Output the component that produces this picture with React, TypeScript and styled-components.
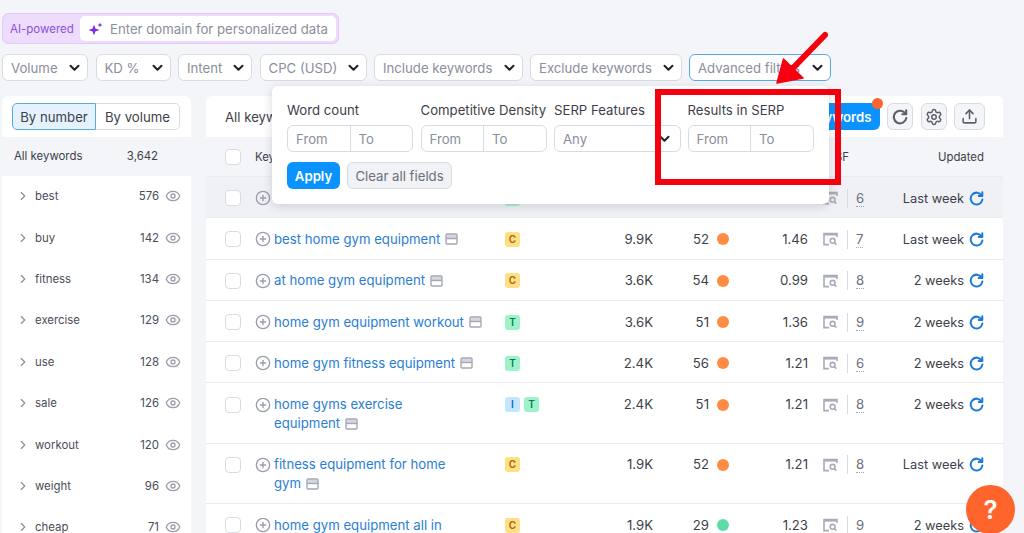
import React from 'react';
import styled, { createGlobalStyle } from 'styled-components';
import { ChevronRight, CirclePlus, Eye, Settings, Upload } from 'lucide-react';

const GlobalStyle = createGlobalStyle`
  html, body {
    margin: 0;
    padding: 0;
    background: #f4f5f9;
  }
  * {
    box-sizing: border-box;
  }
`;

const Page = styled.div`
  position: relative;
  width: 1024px;
  height: 533px;
  overflow: hidden;
  padding: 13px 0 0 2px;
  background: #f4f5f9;
  color: #3d3f4a;
  font-family: Inter, 'Liberation Sans', sans-serif;
  font-size: 13.2px;
`;

const AiBar = styled.div`
  display: flex;
  align-items: center;
  height: 31px;
  width: 337px;
  padding: 3px;
  border-radius: 7px;
  background: #eddcfb;
  box-shadow: inset 0 0 0 1px #e3c9fa;
`;

const AiLabel = styled.span`
  width: 75px;
  padding-left: 5px;
  font-size: 11.5px;
  color: #8c4fe0;
`;

const AiInput = styled.div`
  flex: 1;
  display: flex;
  align-items: center;
  gap: 7px;
  height: 25px;
  padding-left: 8px;
  border-radius: 5px;
  background: #fff;
  color: #8b8e9b;
`;

const FilterRow = styled.div`
  display: flex;
  gap: 7.5px;
  margin-top: 10px;
`;

const FilterButton = styled.div<{ $w: number; $active?: boolean }>`
  display: flex;
  align-items: center;
  justify-content: space-between;
  width: ${(p) => p.$w}px;
  height: 27px;
  padding: 0 7px 0 8px;
  border: 1px solid ${(p) => (p.$active ? '#59a8ea' : '#d9dbe2')};
  border-radius: 6px;
  background: #fff;
  color: #8b8e9b;
  white-space: nowrap;
`;

const Content = styled.div`
  display: flex;
  gap: 15px;
  margin-top: 15px;
`;

const Sidebar = styled.aside`
  width: 189px;
  height: 440px;
  border-radius: 6px 6px 0 0;
  background: #fff;
  overflow: hidden;
`;

const ToggleBar = styled.div`
  display: flex;
  height: 41px;
  padding: 7px 10px;
`;

const Toggle = styled.div<{ $on?: boolean }>`
  display: flex;
  align-items: center;
  justify-content: center;
  width: 84px;
  height: 27px;
  border: 1px solid ${(p) => (p.$on ? '#59a8ea' : '#d9dbe2')};
  border-left-width: ${(p) => (p.$on ? 1 : 0)}px;
  border-radius: ${(p) => (p.$on ? '5px 0 0 5px' : '0 5px 5px 0')};
  background: ${(p) => (p.$on ? '#e4f2fe' : '#fff')};
  color: #3d3f4a;
`;

const SideHead = styled.div`
  display: flex;
  align-items: center;
  height: 38.6px;
  padding-left: 12px;
  background: #f4f5f9;
  font-size: 11.4px;
`;

const SideHeadCount = styled.span`
  margin-left: auto;
  margin-right: 33px;
`;

const SideRow = styled.div`
  display: flex;
  align-items: center;
  height: 41.4px;
  padding: 0 10px 0 14px;
  font-size: 11.4px;
  color: #4a4c57;
`;

const SideName = styled.span`
  margin-left: 5px;
`;

const SideCount = styled.span`
  margin-left: auto;
  margin-right: 6px;
`;

const Main = styled.main`
  width: 797px;
  height: 440px;
  border-radius: 6px 6px 0 0;
  background: #fff;
  overflow: hidden;
`;

const Toolbar = styled.div`
  display: flex;
  align-items: center;
  gap: 7.5px;
  height: 41px;
  padding: 0 18px 0 19px;
`;

const ToolbarTitle = styled.span`
  margin-right: auto;
`;

const PrimaryButton = styled.div`
  position: relative;
  display: flex;
  align-items: center;
  height: 27px;
  padding: 0 8px;
  border-radius: 6px;
  background: #0a93ff;
  color: #fff;
  font-weight: 600;
  white-space: nowrap;
`;

const Notify = styled.span`
  position: absolute;
  top: -5px;
  right: -3px;
  width: 11px;
  height: 11px;
  border-radius: 50%;
  background: #ff642d;
`;

const IconButton = styled.div<{ $w?: number }>`
  display: flex;
  align-items: center;
  justify-content: center;
  width: ${(p) => p.$w ?? 26}px;
  height: 27px;
  border: 1px solid #d9dbe2;
  border-radius: 6px;
  background: #f4f5f9;
  color: #5d606c;
`;

const RowBase = styled.div`
  display: flex;
  padding-left: 19px;
  padding-right: 19px;
`;

const HeadRow = styled(RowBase)`
  align-items: center;
  height: 40px;
  background: #f4f5f9;
  border-bottom: 1px solid #e9ebf0;
  font-size: 11.4px;
`;

const Row = styled(RowBase)<{ $hover?: boolean }>`
  padding-top: 11.7px;
  padding-bottom: 9.6px;
  line-height: 19px;
  border-bottom: 1px solid #e9ebf0;
  background: ${(p) => (p.$hover ? '#f0f1f5' : '#fff')};
`;

const CheckCell = styled.div`
  flex: 0 0 30px;
  display: flex;
  align-items: center;
  height: 19px;
`;

const Checkbox = styled.span`
  width: 16px;
  height: 16px;
  border: 1px solid #d9dbe2;
  border-radius: 4px;
  background: #fff;
`;

const KeywordCell = styled.div`
  flex: 0 0 250px;
  display: flex;
  align-items: flex-start;
  gap: 3px;
  padding-right: 21px;
`;

const PlusWrap = styled.span`
  flex: none;
  display: flex;
  align-items: center;
  height: 19px;
  color: #9a9dab;
`;

const KeywordLink = styled.span`
  color: #2a7ed3;
`;

const LastWord = styled.span`
  white-space: nowrap;
`;

const PageIcon = styled.svg`
  display: inline-block;
  width: 13px;
  height: 12px;
  margin-left: 5px;
  vertical-align: -1.5px;
`;

const IntentCell = styled.div`
  flex: 0 0 80px;
  display: flex;
  gap: 4px;
  height: 19px;
  align-items: center;
`;

const Badge = styled.span<{ $bg: string; $fg: string }>`
  display: flex;
  align-items: center;
  justify-content: center;
  width: 15px;
  height: 15px;
  border-radius: 3px;
  background: ${(p) => p.$bg};
  color: ${(p) => p.$fg};
  font-size: 10px;
  font-weight: 600;
`;

const NumCell = styled.div<{ $w: number }>`
  flex: 0 0 ${(p) => p.$w}px;
  text-align: right;
`;

const KdCell = styled.div`
  flex: 0 0 76px;
  display: flex;
  align-items: center;
  justify-content: flex-end;
  gap: 8px;
  height: 19px;
`;

const Dot = styled.span<{ $c: string }>`
  width: 12px;
  height: 12px;
  border-radius: 50%;
  background: ${(p) => p.$c};
`;

const SfCell = styled.div`
  flex: 0 0 72px;
  display: flex;
  align-items: center;
  height: 19px;
  padding-left: 15px;
  color: #6c6f7b;
`;

const SfSeparator = styled.span`
  width: 1px;
  height: 19px;
  margin: 0 8px 0 9px;
  background: #d9dbe2;
`;

const SfCount = styled.span`
  line-height: 16px;
  border-bottom: 1px dotted #a4a7b3;
`;

const UpdatedCell = styled.div`
  flex: 0 0 104px;
  display: flex;
  align-items: center;
  justify-content: flex-end;
  gap: 5px;
  height: 19px;
  font-size: 12.8px;
  color: #3d3f4a;
  white-space: nowrap;
`;

const HeadCell = styled.div<{ $w: number; $right?: boolean }>`
  flex: 0 0 ${(p) => p.$w}px;
  text-align: ${(p) => (p.$right ? 'right' : 'left')};
`;

const Popup = styled.div`
  position: absolute;
  top: 86px;
  left: 272px;
  width: 557px;
  height: 118px;
  padding: 15px 15px;
  border-radius: 6px;
  background: #fff;
  box-shadow: 0 2px 10px rgba(40, 45, 70, 0.18);
`;

const FieldRow = styled.div`
  display: flex;
  gap: 7.5px;
`;

const Field = styled.div`
  width: 126px;
`;

const FieldLabel = styled.div`
  height: 24px;
  line-height: 19px;
  white-space: nowrap;
`;

const RangeInput = styled.div`
  display: flex;
  height: 27px;
  border: 1px solid #d9dbe2;
  border-radius: 6px;
  color: #8b8e9b;
`;

const RangePart = styled.span`
  flex: 1;
  display: flex;
  align-items: center;
  padding-left: 8px;
  & + & {
    border-left: 1px solid #d9dbe2;
  }
`;

const SelectInput = styled(RangeInput)`
  align-items: center;
  justify-content: space-between;
  width: 127px;
  padding: 0 10px 0 8px;
`;

const ActionRow = styled.div`
  display: flex;
  gap: 7px;
  margin-top: 10px;
`;

const ApplyButton = styled.div`
  display: flex;
  align-items: center;
  justify-content: center;
  width: 53px;
  height: 27px;
  border-radius: 6px;
  background: #0a93ff;
  color: #fff;
  font-weight: 600;
`;

const ClearButton = styled.div`
  display: flex;
  align-items: center;
  justify-content: center;
  width: 105px;
  height: 27px;
  border: 1px solid #d9dbe2;
  border-radius: 6px;
  background: #f1f2f5;
  color: #6c6f7b;
`;

const RedBox = styled.div`
  position: absolute;
  top: 89px;
  left: 655px;
  width: 186px;
  height: 96px;
  border: 6.5px solid #f5000f;
`;

const Arrow = styled.svg`
  position: absolute;
  top: 28px;
  left: 772px;
`;

const HelpButton = styled.div`
  position: absolute;
  top: 485px;
  left: 966px;
  display: flex;
  align-items: center;
  justify-content: center;
  width: 49px;
  height: 49px;
  border-radius: 50%;
  background: #ff642d;
  color: #fff;
  font-size: 26px;
  font-weight: 600;
`;

const Chevron = () => (
  <svg width="11" height="8" viewBox="0 0 11 8" fill="none">
    <path d="M1.5 1.8 5.5 5.8 9.5 1.8" stroke="#1f2028" strokeWidth="2" strokeLinecap="round" strokeLinejoin="round" />
  </svg>
);

const Sparkle = () => (
  <svg width="15" height="14" viewBox="0 0 15 14">
    <path d="M6 2.5 7.4 6.6 11.5 8 7.4 9.4 6 13.5 4.6 9.4.5 8 4.6 6.6Z" fill="#7a2fe6" />
    <path d="M12 .5 12.7 2.3 14.5 3 12.7 3.7 12 5.5 11.3 3.7 9.5 3 11.3 2.3Z" fill="#7a2fe6" />
  </svg>
);

const KeywordPageIcon = () => (
  <PageIcon viewBox="0 0 13 12" fill="none" stroke="#a4a7b5" strokeWidth="1.4">
    <path d="M1.5 1.5H11.5V5H1.5Z" fill="#d5d7df" stroke="none" />
    <rect x="1" y="1" width="11" height="10" rx="1" />
    <path d="M1 5.5H12" />
  </PageIcon>
);

const SerpIcon = () => (
  <svg width="15" height="14" viewBox="0 0 15 14" fill="none" stroke="#a9acb9" strokeWidth="1.6">
    <path d="M14 5V1.6H1V12.6H6" />
    <path d="M1 2.6H14" strokeWidth="2" />
    <circle cx="9.6" cy="8.8" r="2.4" />
    <path d="M11.4 10.6 13.4 12.6" />
  </svg>
);

const ReloadIcon = ({ size, color }: { size: number; color: string }) => (
  <svg width={size} height={size} viewBox="0 0 15 15" fill="none" stroke={color} strokeWidth="2" strokeLinecap="round" strokeLinejoin="round">
    <path d="M12.6 4.4A5.9 5.9 0 1 0 13.4 8.6" />
    <path d="M13.3 1.3V4.9H9.7" />
  </svg>
);

type Intent = 'C' | 'I' | 'T';

const intentColors: Record<Intent, { bg: string; fg: string }> = {
  C: { bg: '#ffdf85', fg: '#a8650a' },
  I: { bg: '#c4e5fe', fg: '#0a69c2' },
  T: { bg: '#9ef2c9', fg: '#0a7a55' },
};

const filters = [
  { label: 'Volume', w: 86 },
  { label: 'KD %', w: 75 },
  { label: 'Intent', w: 74 },
  { label: 'CPC (USD)', w: 107 },
  { label: 'Include keywords', w: 148.5 },
  { label: 'Exclude keywords', w: 151.5 },
];

const groups = [
  ['best', '576'],
  ['buy', '142'],
  ['fitness', '134'],
  ['exercise', '129'],
  ['use', '128'],
  ['sale', '126'],
  ['workout', '120'],
  ['weight', '96'],
  ['cheap', '71'],
];

const orange = '#ff8c43';
const green = '#5fdba7';

const rows: {
  keyword: string;
  intents: Intent[];
  volume: string;
  kd: number;
  dot: string;
  cpc: string;
  sf: number;
  updated: string;
}[] = [
  { keyword: 'home workout machines', intents: ['T'], volume: '14.8K', kd: 58, dot: orange, cpc: '1.46', sf: 6, updated: 'Last week' },
  { keyword: 'best home gym equipment', intents: ['C'], volume: '9.9K', kd: 52, dot: orange, cpc: '1.46', sf: 7, updated: 'Last week' },
  { keyword: 'at home gym equipment', intents: ['C'], volume: '3.6K', kd: 54, dot: orange, cpc: '0.99', sf: 8, updated: '2 weeks' },
  { keyword: 'home gym equipment workout', intents: ['T'], volume: '3.6K', kd: 51, dot: orange, cpc: '1.36', sf: 9, updated: '2 weeks' },
  { keyword: 'home gym fitness equipment', intents: ['T'], volume: '2.4K', kd: 56, dot: orange, cpc: '1.21', sf: 6, updated: '2 weeks' },
  { keyword: 'home gyms exercise equipment', intents: ['I', 'T'], volume: '2.4K', kd: 51, dot: orange, cpc: '1.21', sf: 8, updated: '2 weeks' },
  { keyword: 'fitness equipment for home gym', intents: ['C'], volume: '1.9K', kd: 52, dot: orange, cpc: '1.21', sf: 8, updated: 'Last week' },
  { keyword: 'home gym equipment all in one', intents: ['C'], volume: '1.9K', kd: 29, dot: green, cpc: '1.23', sf: 9, updated: '2 weeks' },
];

const popupFields = ['Word count', 'Competitive Density', 'SERP Features', 'Results in SERP'];

const splitLastWord = (text: string) => {
  const at = text.lastIndexOf(' ');
  return [text.slice(0, at + 1), text.slice(at + 1)];
};

const App = () => (
  <Page>
    <GlobalStyle />
    <AiBar>
      <AiLabel>AI-powered</AiLabel>
      <AiInput>
        <Sparkle />
        Enter domain for personalized data
      </AiInput>
    </AiBar>

    <FilterRow>
      {filters.map((f) => (
        <FilterButton key={f.label} $w={f.w}>
          {f.label}
          <Chevron />
        </FilterButton>
      ))}
      <FilterButton $w={142} $active>
        Advanced filters
        <Chevron />
      </FilterButton>
    </FilterRow>

    <Content>
      <Sidebar>
        <ToggleBar>
          <Toggle $on>By number</Toggle>
          <Toggle>By volume</Toggle>
        </ToggleBar>
        <SideHead>
          All keywords
          <SideHeadCount>3,642</SideHeadCount>
        </SideHead>
        {groups.map(([name, count]) => (
          <SideRow key={name}>
            <ChevronRight size={14} color="#8b8e9b" strokeWidth={2} />
            <SideName>{name}</SideName>
            <SideCount>{count}</SideCount>
            <Eye size={16} color="#9a9dab" strokeWidth={2} />
          </SideRow>
        ))}
      </Sidebar>

      <Main>
        <Toolbar>
          <ToolbarTitle>All keywords: 3,642</ToolbarTitle>
          <PrimaryButton>
            To keywords
            <Notify />
          </PrimaryButton>
          <IconButton>
            <ReloadIcon size={16} color="#5d606c" />
          </IconButton>
          <IconButton>
            <Settings size={18} strokeWidth={2} />
          </IconButton>
          <IconButton $w={31}>
            <Upload size={17} strokeWidth={2.2} />
          </IconButton>
        </Toolbar>

        <HeadRow>
          <CheckCell>
            <Checkbox />
          </CheckCell>
          <HeadCell $w={250}>Keyword</HeadCell>
          <HeadCell $w={80}>Intent</HeadCell>
          <HeadCell $w={68} $right>Volume</HeadCell>
          <HeadCell $w={76} $right>KD %</HeadCell>
          <HeadCell $w={79} $right>CPC (USD)</HeadCell>
          <HeadCell $w={41} $right>SF</HeadCell>
          <HeadCell $w={135} $right>Updated</HeadCell>
        </HeadRow>

        {rows.map((r, i) => {
          const [head, last] = splitLastWord(r.keyword);
          return (
            <Row key={r.keyword} $hover={i === 0}>
              <CheckCell>
                <Checkbox />
              </CheckCell>
              <KeywordCell>
                <PlusWrap>
                  <CirclePlus size={16} strokeWidth={2} />
                </PlusWrap>
                <KeywordLink>
                  {head}
                  <LastWord>
                    {last}
                    <KeywordPageIcon />
                  </LastWord>
                </KeywordLink>
              </KeywordCell>
              <IntentCell>
                {r.intents.map((it) => (
                  <Badge key={it} $bg={intentColors[it].bg} $fg={intentColors[it].fg}>
                    {it}
                  </Badge>
                ))}
              </IntentCell>
              <NumCell $w={68}>{r.volume}</NumCell>
              <KdCell>
                {r.kd}
                <Dot $c={r.dot} />
              </KdCell>
              <NumCell $w={79}>{r.cpc}</NumCell>
              <SfCell>
                <SerpIcon />
                <SfSeparator />
                <SfCount>{r.sf}</SfCount>
              </SfCell>
              <UpdatedCell>
                {r.updated}
                <ReloadIcon size={15} color="#1a7ad6" />
              </UpdatedCell>
            </Row>
          );
        })}
      </Main>
    </Content>

    <Popup>
      <FieldRow>
        {popupFields.map((label) => (
          <Field key={label}>
            <FieldLabel>{label}</FieldLabel>
            {label === 'SERP Features' ? (
              <SelectInput>
                Any
                <Chevron />
              </SelectInput>
            ) : (
              <RangeInput>
                <RangePart>From</RangePart>
                <RangePart>To</RangePart>
              </RangeInput>
            )}
          </Field>
        ))}
      </FieldRow>
      <ActionRow>
        <ApplyButton>Apply</ApplyButton>
        <ClearButton>Clear all fields</ClearButton>
      </ActionRow>
    </Popup>

    <RedBox />
    <Arrow width="60" height="60" viewBox="0 0 60 60" fill="none">
      <path d="M53 7 21 40" stroke="#f5000f" strokeWidth="6" strokeLinecap="round" />
      <path d="M5 55 11.5 31 31 50Z" fill="#f5000f" stroke="#f5000f" strokeWidth="1.5" strokeLinejoin="round" />
    </Arrow>

    <HelpButton>?</HelpButton>
  </Page>
);

export default App;
